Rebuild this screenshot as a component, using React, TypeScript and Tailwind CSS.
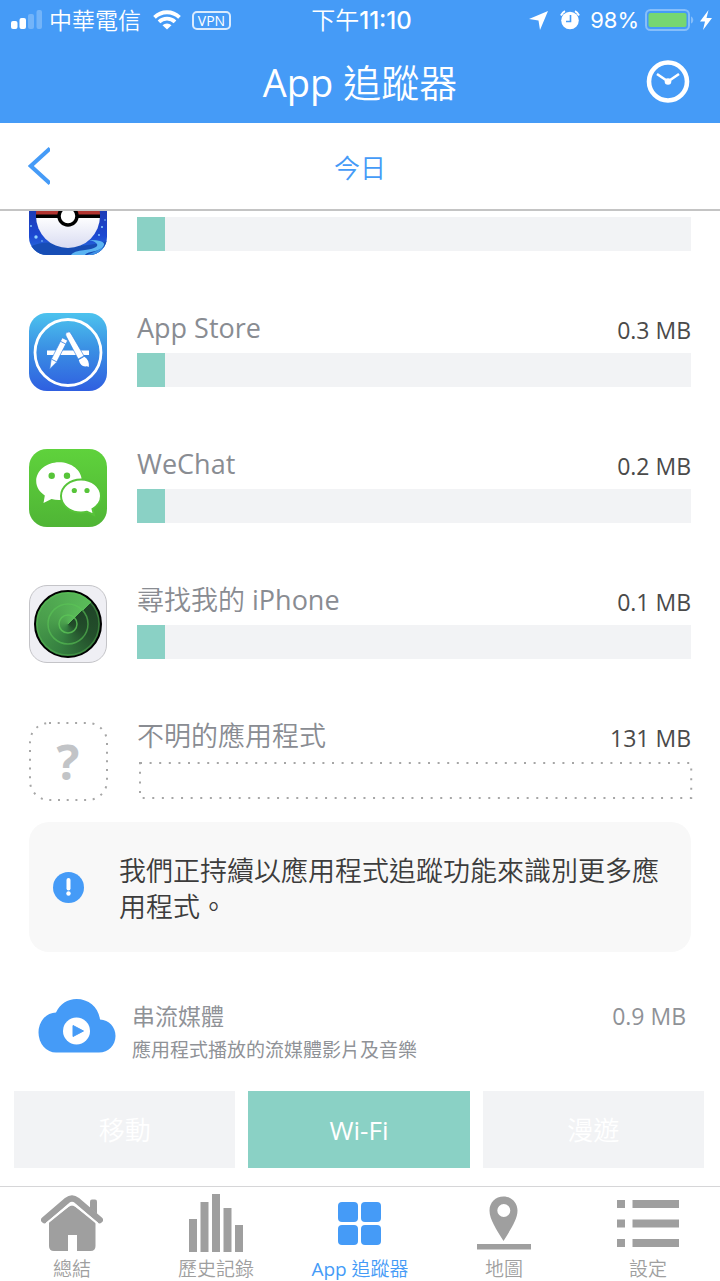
import type { ReactNode } from "react";

type AppUsage = { name: string; amount: string; icon: ReactNode; percent: number };

const apps: AppUsage[] = [
  { name: "App Store", amount: "0.3 MB", icon: <AppStoreIcon />, percent: 5 },
  { name: "WeChat", amount: "0.2 MB", icon: <WeChatIcon />, percent: 5 },
  { name: "尋找我的 iPhone", amount: "0.1 MB", icon: <FindPhoneIcon />, percent: 5 },
];

const networks = ["移動", "Wi-Fi", "漫遊"];

const tabs = [
  { label: "總結", icon: <HomeIcon /> },
  { label: "歷史記錄", icon: <HistoryIcon /> },
  { label: "App 追蹤器", icon: <GridIcon />, active: true },
  { label: "地圖", icon: <MapIcon /> },
  { label: "設定", icon: <SettingsIcon /> },
];

export default function App() {
  return (
    <div className="min-h-screen flex flex-col bg-white overflow-hidden font-['Open_Sans','Noto_Sans_CJK_TC_DemiLight','Noto_Sans_CJK_TC',sans-serif]">
      <header className="bg-[#459bf7] text-white">
        <StatusBar />
        <div className="grid grid-cols-[1fr_auto_1fr] items-center h-[83px] px-[30px]">
          <h1 className="col-start-2 text-[38px] leading-[48px] font-normal">App 追蹤器</h1>
          <button aria-label="時間" className="justify-self-end">
            <ClockIcon />
          </button>
        </div>
      </header>

      <div className="grid grid-cols-[1fr_auto_1fr] items-center h-[88px] px-7 border-b-2 border-[#c4c4c4]">
        <button aria-label="返回" className="justify-self-start">
          <svg width="22" height="38" viewBox="0 0 22 38" fill="none" stroke="#459bf7" strokeWidth="4">
            <path d="M22 1.500 2.800 19 22 36.500" />
          </svg>
        </button>
        <h2 className="pt-1 text-[26px] leading-9 font-normal text-[#459bf7]">今日</h2>
      </div>

      <main className="flex-1 flex flex-col">
        <div className="flex flex-col gap-[58px] px-[29px]">
          {/* The list is scrolled, only the lower part of the first row shows */}
          <div className="flex items-end gap-[30px] h-11 overflow-hidden">
            <PokemonIcon />
            <div className="flex-1 pb-1">
              <UsageBar label="Pokémon GO" percent={5} />
            </div>
          </div>
          {apps.map((app) => (
            <UsageRow key={app.name} {...app} />
          ))}
          <div className="flex gap-[30px]">
            <UnknownIcon />
            <div className="flex-1">
              <RowTitle name="不明的應用程式" amount="131 MB" />
              <svg className="w-full h-[36px] overflow-visible" aria-hidden="true">
                <rect x="3" y="2" width="99.5%" height="35" fill="none" stroke="#a6a6a6" strokeWidth="2" strokeDasharray="2 7.600" />
              </svg>
            </div>
          </div>
        </div>

        <div className="mx-[29px] mt-[23px] flex items-center rounded-[20px] bg-[#f8f8f8] h-[130px] pl-6 pr-8">
          <svg width="31" height="31" viewBox="0 0 31 31" className="shrink-0">
            <circle cx="15.500" cy="15.500" r="15.500" fill="#459bf7" />
            <path d="M15.500 8v8.500" stroke="#fff" strokeWidth="4" strokeLinecap="round" />
            <circle cx="15.500" cy="21.500" r="2.200" fill="#fff" />
          </svg>
          <p className="ml-[35px] pt-1 text-[27px] leading-9 text-[#3c3c3c]">
            我們正持續以應用程式追蹤功能來識別更多應用程式。
          </p>
        </div>

        <div className="mt-[46px] flex items-start pl-[38px] pr-[34px]">
          <CloudIcon />
          <div className="ml-4 flex-1">
            <div className="flex justify-between text-[23px] leading-9 text-[#8f9297] font-['Open_Sans','Noto_Sans_CJK_TC',sans-serif]">
              <span>串流媒體</span>
              <span>0.9 MB</span>
            </div>
            <p className="text-[19px] leading-8 text-[#8f9297] font-['Open_Sans','Noto_Sans_CJK_TC',sans-serif]">
              應用程式播放的流媒體影片及音樂
            </p>
          </div>
        </div>

        <div className="mt-[25px] mb-[18px] grid grid-cols-3 gap-[13px] pl-[14px] pr-4">
          {networks.map((network) => (
            <button
              key={network}
              className={
                network === "Wi-Fi"
                  ? "h-[77px] bg-[#8ad1c5] text-white text-[26px] pt-[2px]"
                  : "h-[77px] bg-[#f2f3f5] text-white text-[26px] pt-[2px]"
              }
            >
              {network}
            </button>
          ))}
        </div>
      </main>

      <nav className="grid grid-cols-5 border-t border-[#d6d6d8]">
        {tabs.map((tab) => (
          <a
            key={tab.label}
            href="#"
            className={
              tab.active
                ? "flex flex-col items-center pt-[7px] text-[#459bf7]"
                : "flex flex-col items-center pt-[7px] text-[#9f9f9f]"
            }
          >
            {tab.icon}
            <span className="pt-[5px] text-[19px] leading-6">{tab.label}</span>
          </a>
        ))}
      </nav>
    </div>
  );
}

function StatusBar() {
  return (
    <div className="grid grid-cols-[1fr_auto_1fr] items-center h-10 pl-[11px] pr-2 text-[23px] leading-8">
      <div className="flex items-center">
        <svg width="31" height="20" viewBox="0 0 31 20" fill="#fff">
          <rect x="0" y="11" width="6.500" height="8" rx="2" />
          <rect x="8.500" y="8" width="6.500" height="11" rx="2" />
          <rect x="17" y="4" width="6" height="15" rx="2" opacity=".25" />
          <rect x="25.500" y="0" width="5.500" height="19" rx="2" opacity=".25" />
        </svg>
        <span className="ml-[7px]">中華電信</span>
        <svg className="ml-3" width="28" height="20" viewBox="0 0 28 20" fill="none" stroke="#fff" strokeWidth="3.800">
          <path d="M1.500 7.300a18 18 0 0 1 25 0" />
          <path d="M6 11.900a11.500 11.500 0 0 1 16 0" />
          <path d="M14 19.500 9.500 15.200a6.500 6.500 0 0 1 9 0Z" fill="#fff" stroke="none" />
        </svg>
        <span className="ml-[11px] w-[39px] rounded-[5px] border-2 border-white/80 text-center text-[14px] leading-[15px] font-medium">VPN</span>
      </div>
      <div className="pt-[2px] font-['Inter','Noto_Sans_CJK_TC_DemiLight','Noto_Sans_CJK_TC',sans-serif] text-[24px]">
        下午<span className="font-medium">11:10</span>
      </div>
      <div className="flex items-center justify-self-end">
        <svg width="19" height="19" viewBox="0 0 19 19" fill="#fff">
          <path d="M19 0 11 19 9.500 9.500 0 8Z" />
        </svg>
        <svg className="ml-3" width="20" height="20" viewBox="0 0 20 20">
          <circle cx="10" cy="10.500" r="8.800" fill="#fff" />
          <path d="M1 5.500A9 9 0 0 1 5 1.200M19 5.500a9 9 0 0 0-4-4.300" fill="none" stroke="#fff" strokeWidth="2" />
          <path d="M10.500 5v6.500H6" fill="none" stroke="#459bf7" strokeWidth="1.600" />
        </svg>
        <span className="ml-[10px] font-['Inter',sans-serif] text-[22px]">98%</span>
        <svg className="ml-[6px]" width="50" height="22" viewBox="0 0 50 22">
          <rect x="1" y="1" width="43" height="20" rx="4.500" fill="none" stroke="#fff" strokeOpacity=".35" strokeWidth="2" />
          <rect x="3.500" y="4" width="38" height="14" rx="2" fill="#76d672" />
          <path d="M46 7.500c3 1 3 6 0 7Z" fill="#fff" opacity=".35" />
        </svg>
        <svg className="ml-[5px]" width="12" height="20" viewBox="0 0 12 20" fill="#fff">
          <path d="M8.500 0 0 11.500h5L3 20l9-12H6.500Z" />
        </svg>
      </div>
    </div>
  );
}

function RowTitle({ name, amount }: { name: string; amount: string }) {
  return (
    <div className="flex items-center justify-between h-10 pb-[10px] leading-7">
      <span className="text-[27px] text-[#898c92]">{name}</span>
      <span className="pt-1 text-[23px] text-[#4a4a4a]">{amount}</span>
    </div>
  );
}

function UsageBar({ label, percent }: { label: string; percent: number }) {
  return (
    <div role="progressbar" aria-label={label} aria-valuenow={percent} className="h-[34px] bg-[#f2f3f5]">
      <div className="h-full bg-[#8ad1c5]" style={{ width: `${percent}%` }} />
    </div>
  );
}

function UsageRow({ name, amount, icon, percent }: AppUsage) {
  return (
    <div className="flex gap-[30px]">
      {icon}
      <div className="flex-1">
        <RowTitle name={name} amount={amount} />
        <UsageBar label={name} percent={percent} />
      </div>
    </div>
  );
}

function PokemonIcon() {
  return (
    <svg width="78" height="78" viewBox="0 0 78 78" className="shrink-0 rounded-[18px]">
      <defs>
        <linearGradient id="pkSky" x1="0" y1="0" x2="0" y2="1">
          <stop offset="0" stopColor="#1b2a8f" />
          <stop offset=".75" stopColor="#1c48d2" />
          <stop offset="1" stopColor="#2c74dd" />
        </linearGradient>
        <linearGradient id="pkBall" x1="0" y1="0" x2="0" y2="1">
          <stop offset="0" stopColor="#fff" />
          <stop offset="1" stopColor="#d9dcf2" />
        </linearGradient>
      </defs>
      <rect width="78" height="78" fill="url(#pkSky)" />
      <path d="M0 70q16-7 34-3 22 4 44-3v14H0Z" fill="#174db5" />
      <path d="M42 78q2-4 14-5 14-2 12-6-2-3-8-4 16 0 15 5-1 5-13 7-5 1-6 3Z" fill="#5bb4f2" />
      <path d="M58 78q8-3 20-10v5q-6 3-9 5Z" fill="#3e91e6" />
      <path d="M7 39a32 32 0 0 0 64 0Z" fill="url(#pkBall)" />
      <path d="M7 38a32 32 0 0 1 64 0Z" fill="#b23430" />
      <path d="M7 37.500h64v3.500H7Z" fill="#000" />
      <circle cx="39" cy="39" r="9" fill="#fff" stroke="#000" strokeWidth="3.500" />
      <g fill="#8fd3ff">
        <circle cx="7" cy="60" r="1.700" />
        <circle cx="2" cy="49" r=".9" />
        <circle cx="13" cy="64" r=".8" />
        <circle cx="73" cy="50" r="1" />
        <circle cx="70" cy="58" r=".9" />
        <circle cx="76" cy="43" r=".8" />
      </g>
    </svg>
  );
}

function AppStoreIcon() {
  return (
    <svg width="78" height="78" viewBox="0 0 78 78" className="shrink-0 rounded-[18px]">
      <defs>
        <linearGradient id="storeBg" x1="0" y1="0" x2="0" y2="1">
          <stop offset="0" stopColor="#4cc3ee" />
          <stop offset=".45" stopColor="#3b91e4" />
          <stop offset="1" stopColor="#2f5fe0" />
        </linearGradient>
      </defs>
      <rect width="78" height="78" fill="url(#storeBg)" />
      <circle cx="39" cy="39.500" r="33" fill="none" stroke="#fff" strokeWidth="2.800" />
      <path d="M18 37.500H60V42H18Z" fill="#fff" />
      {/* pencil */}
      <g transform="translate(35.500 27) rotate(27)">
        <path d="M-3-1h6v24.500l-3 9-3-9Z" fill="#fff" stroke="#3a85e3" strokeWidth=".6" />
        <path d="M-3 3h6M-3 23h6" stroke="#3a85e3" strokeWidth=".8" />
      </g>
      {/* brush */}
      <g transform="translate(38.500 20) rotate(-29)">
        <path d="M-2.800 2a2.800 2.800 0 0 1 5.600 0L3.300 28h-6.600Z" fill="#fff" stroke="#3a85e3" strokeWidth=".6" />
        <path d="M-3.200 29h6.400q3 5-1 11-1-2-3-2-4-3-2.400-9Z" fill="#fff" />
      </g>
    </svg>
  );
}

function WeChatIcon() {
  return (
    <svg width="78" height="78" viewBox="0 0 78 78" className="shrink-0 rounded-[18px]">
      <defs>
        <linearGradient id="chatBg" x1="0" y1="0" x2="0" y2="1">
          <stop offset="0" stopColor="#5fd23c" />
          <stop offset="1" stopColor="#4fb535" />
        </linearGradient>
      </defs>
      <rect width="78" height="78" fill="url(#chatBg)" />
      <path d="M30 13.300C17.400 13.300 7.200 21.700 7.200 32c0 6 3.300 11 8.600 14.500L14.500 54l8-4c2.400.7 4.900 1 7.500 1 12.600 0 22.800-8.300 22.800-19S42.600 13.300 30 13.300Z" fill="#fff" />
      <path d="M52 30.500c-11 0-20 7.300-20 16.500s9 16.500 20 16.500c2 0 4-.3 6-.8l7 3.300-1.500-6C68.500 57 72 52.400 72 47c0-9.200-9-16.500-20-16.500Z" fill="#fff" stroke="#57c439" strokeWidth="2" />
      <g fill="#57c439">
        <circle cx="22.700" cy="26.700" r="3.200" />
        <circle cx="38" cy="26.700" r="3.200" />
        <circle cx="45.300" cy="41.500" r="2.600" />
        <circle cx="58" cy="41.500" r="2.600" />
      </g>
    </svg>
  );
}

function FindPhoneIcon() {
  return (
    <div className="w-[78px] h-[78px] shrink-0 rounded-[18px] border border-[#c4c4c8] bg-[#efeff4] flex items-center justify-center">
      <div className="w-[68px] h-[68px] rounded-full border-2 border-black bg-[conic-gradient(from_47deg,#1f4427,#234f2b_20%,#358040_42%,#4a9e4c_65%,#5abb59)]">
        <svg viewBox="0 0 64 64" fill="none" stroke="#5cc657" strokeWidth="1.500">
          <circle cx="32" cy="32" r="9" opacity=".8" />
          <circle cx="32" cy="32" r="20" opacity=".6" />
          <circle cx="32" cy="32" r="31" opacity=".4" />
        </svg>
      </div>
    </div>
  );
}

function UnknownIcon() {
  return (
    <div className="w-[78px] h-[78px] shrink-0 grid place-items-center">
      <svg width="78" height="78" viewBox="0 0 78 78" className="col-start-1 row-start-1 overflow-visible">
        <rect x="1" y="2" width="77" height="77" rx="19" fill="none" stroke="#a6a6a6" strokeWidth="2" strokeDasharray="2 6.700" />
      </svg>
      <span className="col-start-1 row-start-1 pt-1 text-[48px] leading-[48px] font-bold text-[#c2c4c7]">?</span>
    </div>
  );
}

function ClockIcon() {
  return (
    <svg width="44" height="44" viewBox="0 0 44 44" fill="none" stroke="#fff">
      <circle cx="22" cy="21.500" r="19" strokeWidth="4.600" />
      <path d="m11 14 11 7.500 11-7.500" strokeWidth="2.600" />
      <circle cx="22" cy="21.500" r="3.300" fill="#fff" stroke="none" />
    </svg>
  );
}

function CloudIcon() {
  return (
    <svg width="78" height="55" viewBox="0 -1 78 55" className="shrink-0">
      <path d="M18 53.500a17.500 20 0 0 1 0-40C22 5 29.500 0 38.500 0 51 0 60.500 8.500 62 20.500c9 .5 15.500 7.500 15.500 16.500S70.500 53.500 61 53.500Z" fill="#459bf7" />
      <circle cx="38.500" cy="32" r="13.500" fill="#fff" />
      <path d="M35 26.500v11l10.500-5.500Z" fill="#459bf7" stroke="#459bf7" strokeLinejoin="round" />
    </svg>
  );
}

function HomeIcon() {
  return (
    <svg width="62" height="58" viewBox="0 0 62 58" fill="currentColor">
      <path d="M49 14V7.500a2 2 0 0 1 2-2h3a2 2 0 0 1 2 2V20Z" />
      <path d="M3.300 26 26 6.500q5-4 10 0L58.700 26" fill="none" stroke="currentColor" strokeWidth="6.500" strokeLinecap="round" />
      <path d="m8 28 20-15.500q3-2 6 0L54.500 28v24q0 5-5 5H36V41h-9v16H13q-5 0-5-5Z" />
      <path d="m5.500 29.500 22-18q3.500-2.500 7 0l22 18" fill="none" stroke="#fff" strokeWidth="2.200" />
    </svg>
  );
}

function HistoryIcon() {
  return (
    <svg width="54" height="58" viewBox="0 0 54 58" fill="currentColor">
      <path d="M0 25h8v33H0ZM11.500 8h8v50h-8ZM23 0h8v58h-8ZM34.500 14h8v44h-8ZM46 31h8v27h-8Z" />
    </svg>
  );
}

function GridIcon() {
  return (
    <svg width="44" height="58" viewBox="0 0 44 58" fill="currentColor">
      <rect x="0" y="8" width="20" height="20" rx="4" />
      <rect x="23" y="8" width="20" height="20" rx="4" />
      <rect x="0" y="31" width="20" height="20" rx="4" />
      <rect x="23" y="31" width="20" height="20" rx="4" />
    </svg>
  );
}

function MapIcon() {
  return (
    <svg width="54" height="58" viewBox="0 0 54 58" fill="currentColor">
      <path fillRule="evenodd" d="M26.500 2.500c-8 0-14 6-14 14 0 9 7 19 14 30.500 7-11.500 14-21.500 14-30.500 0-8-6-14-14-14Zm.3 7.500a6.500 6.500 0 1 1 0 13 6.500 6.500 0 0 1 0-13Z" />
      <path d="M0 50h54v5.500H0Z" />
    </svg>
  );
}

function SettingsIcon() {
  return (
    <svg width="62" height="58" viewBox="0 0 62 58" fill="currentColor">
      <path d="M0 6h8v8H0ZM15.500 6H62v8H15.500ZM0 25.500h8v8H0ZM15.500 25.500H62v8H15.500ZM0 45h8v8H0ZM15.500 45H62v8H15.500Z" />
    </svg>
  );
}
